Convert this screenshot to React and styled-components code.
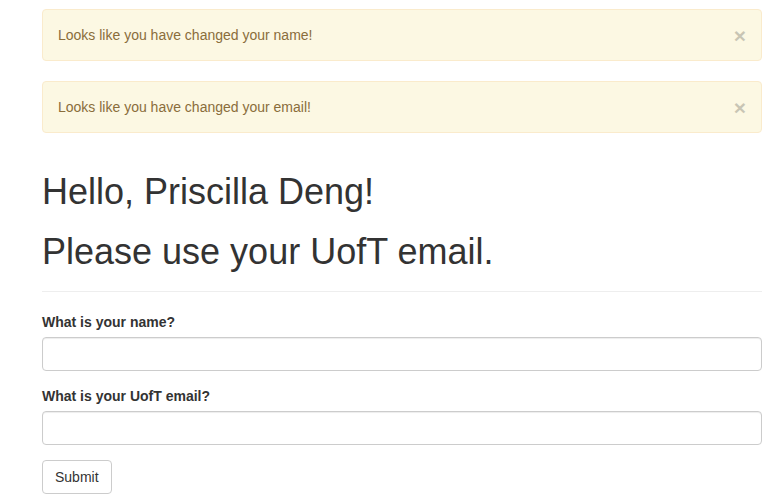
import styled, { createGlobalStyle } from "styled-components";

const GlobalStyle = createGlobalStyle`
  * {
    box-sizing: border-box;
  }
  body {
    margin: 0;
    background: #fff;
    color: #333;
    font-family: "Liberation Sans", Arial, Helvetica, sans-serif;
    font-size: 14px;
    line-height: 1.42857143;
  }
`;

const Page = styled.div`
  width: 720px;
  margin-left: 42px;
  padding-top: 9px;
`;

const Alerts = styled.div`
  display: flex;
  flex-direction: column;
  gap: 20px;
  margin-bottom: 39px;
`;

const Alert = styled.div`
  position: relative;
  padding: 15px 35px 15px 15px;
  border: 1px solid #faebcc;
  border-radius: 4px;
  background: #fcf8e3;
  color: #8a6d3b;
`;

const Close = styled.button`
  position: absolute;
  top: 15px;
  right: 15px;
  padding: 0;
  border: 0;
  background: transparent;
  font-family: "Liberation Sans", Arial, sans-serif;
  font-size: 21px;
  font-weight: bold;
  line-height: 1;
  color: #000;
  opacity: 0.2;
  cursor: pointer;
`;

const Heading = styled.h1`
  margin: 20px 0 10px;
  font-size: 36px;
  font-weight: 500;
  line-height: 1.1;
  color: #333;
`;

const Rule = styled.hr`
  margin: 20px 0;
  border: 0;
  border-top: 1px solid #eee;
`;

const FormGroup = styled.div`
  margin-bottom: 15px;
`;

const Label = styled.label`
  display: inline-block;
  margin-bottom: 5px;
  font-weight: bold;
`;

const Input = styled.input`
  display: block;
  width: 100%;
  height: 34px;
  padding: 6px 12px;
  border: 1px solid #ccc;
  border-radius: 4px;
  background: #fff;
  box-shadow: inset 0 1px 1px rgba(0, 0, 0, 0.075);
  font-family: inherit;
  font-size: 14px;
  color: #555;
`;

const Button = styled.button`
  display: inline-block;
  height: 34px;
  padding: 6px 12px;
  border: 1px solid #ccc;
  border-radius: 4px;
  background: #fff;
  color: #333;
  font-family: inherit;
  font-size: 14px;
  line-height: 1.42857143;
  cursor: pointer;
`;

const messages = [
  "Looks like you have changed your name!",
  "Looks like you have changed your email!",
];

export default function App() {
  return (
    <>
      <GlobalStyle />
      <Page>
        <Alerts>
          {messages.map((m) => (
            <Alert key={m}>
              <Close aria-label="Close">×</Close>
              {m}
            </Alert>
          ))}
        </Alerts>
        <Heading>Hello, Priscilla Deng!</Heading>
        <Heading>Please use your UofT email.</Heading>
        <Rule />
        <form onSubmit={(e) => e.preventDefault()}>
          <FormGroup>
            <Label htmlFor="name">What is your name?</Label>
            <Input id="name" type="text" />
          </FormGroup>
          <FormGroup>
            <Label htmlFor="email">What is your UofT email?</Label>
            <Input id="email" type="email" />
          </FormGroup>
          <Button type="submit">Submit</Button>
        </form>
      </Page>
    </>
  );
}
